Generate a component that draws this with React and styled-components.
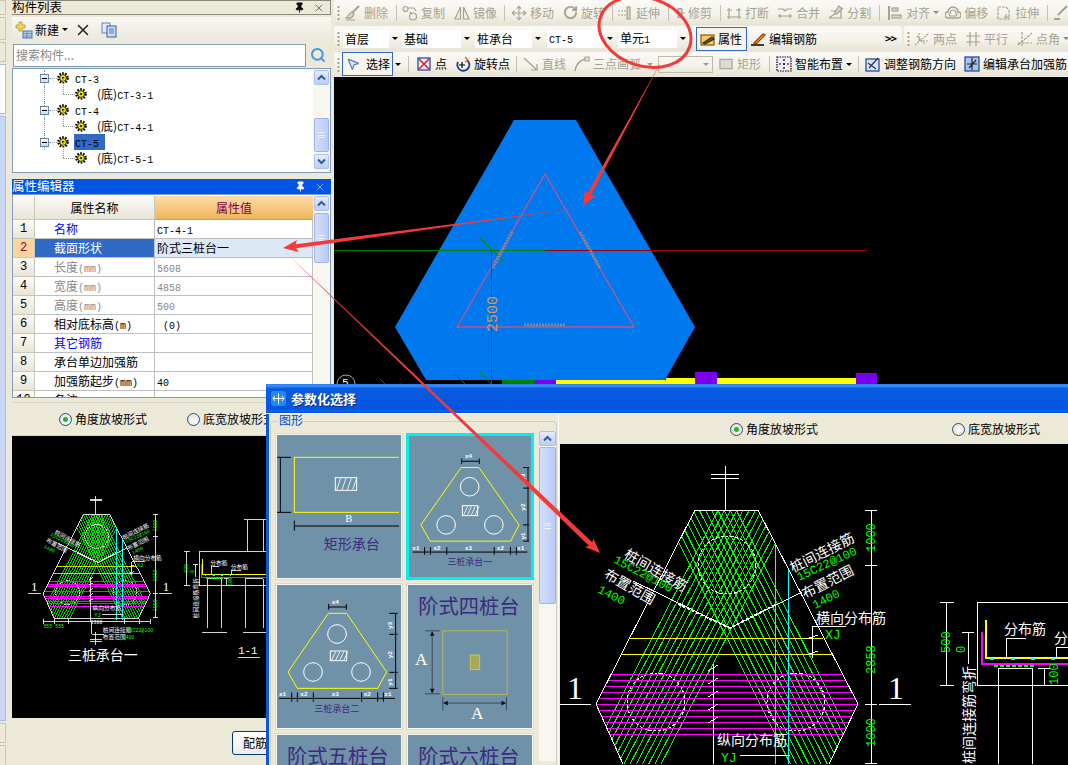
import React from 'react';
import styled, { createGlobalStyle } from 'styled-components';
import { Move, RotateCw, Search, MousePointer2, X, Pin } from 'lucide-react';

const Global = createGlobalStyle`
  html, body { margin: 0; padding: 0; background: #ece9d8; }
  body { font-family: "Noto Sans CJK SC", "Liberation Sans", sans-serif; font-size: 12px; color: #000; }
  * { box-sizing: border-box; }
`;

const Page = styled.div`
  position: relative; width: 1068px; height: 765px; overflow: hidden; display: flex;
  background: #ece9d8; line-height: 1;
`;
const Mono = styled.span`font-family: "Liberation Mono", monospace; font-size: 10px;`;

/* ---------- left strip ---------- */
const Strip = styled.div`
  width: 12px; flex: none; display: flex; flex-direction: column; gap: 2px; padding-right: 6px;
`;
const StripTab = styled.div`
  height: ${p => p.$h}px; flex: none; background: #ece9d8; border: 1px solid #c9c6b4; border-left: 0;
`;
const StripList = styled.div`
  height: ${p => p.$h}px; flex: none; background: ${p => p.$bg}; border: 1px solid #a8bdea; border-left: 0;
`;

/* ---------- left panels ---------- */
const Side = styled.div`width: 322px; flex: none; display: flex; flex-direction: column; padding-right: 3px; background: #ece9d8;`;
const PaneTitle = styled.div`
  height: 15px; flex: none; display: flex; align-items: center; font-size: 12.5px; padding-right: 5px; width: 319px;
  background: ${p => p.$on ? '#0055e5' : '#ece9d8'}; color: ${p => p.$on ? '#fff' : '#000'};
  ${p => !p.$on && 'border: 1px solid #8a8878; border-left: 0; border-top: 1px solid #8a8878;'}
  svg { flex: none; }
`;
const TitleText = styled.span`flex: 1;`;
const TreeTools = styled.div`
  height: 25px; margin-top: 2px; display: flex; align-items: center; padding-left: 3px;
  background: linear-gradient(#f8f7f2, #ebe8db);
`;
const NewLabel = styled.span`font-size: 12px; margin-left: 2px;`;
const Caret = styled.span`
  width: 0; height: 0; border-left: 3px solid transparent; border-right: 3px solid transparent;
  border-top: 3px solid ${p => p.$c || '#000'}; margin-left: ${p => p.$ml ?? 3}px; flex: none;
`;
const SearchRow = styled.div`height: 24px; margin-top: 1px; display: flex; align-items: center; padding-left: 1px;`;
const SearchBox = styled.div`
  width: 293px; height: 23px; background: #fff; border: 1px solid #7f9db9; color: #888; font-size: 12px;
  display: flex; align-items: center; padding-left: 2px;
`;
const SearchBtn = styled.div`width: 24px; display: flex; justify-content: center; color: #3e9be8;`;
const TreeBox = styled.div`
  height: 105px; width: 319px; flex: none; margin-top: 1px; background: #fff; border: 1px solid #7f9db9; display: flex;
`;
const TreeBody = styled.div`flex: 1; padding-top: 1px; overflow: hidden;`;
const TreeRow = styled.div`
  position: relative; height: 16px; display: flex; align-items: center; padding-left: ${p => p.$in}px;
  &::before {
    content: ''; position: absolute; left: 31px; top: 0;
    height: ${p => p.$stem}px; border-left: 1px dotted #999;
  }
`;
const Expand = styled.span`
  position: relative; width: 9px; height: 9px; flex: none; border: 1px solid #6a89a8; background: linear-gradient(#fff, #cfd8e4);
  &::after { content: ''; position: absolute; left: 1px; top: 3px; width: 5px; height: 1px; background: #000; }
`;
const Dots = styled.span`width: ${p => p.$w}px; flex: none; border-top: 1px dotted #999;`;
const ChildStem = styled.span`
  position: absolute; left: 50px; top: -8px; height: 16px; border-left: 1px dotted #999;
`;
const NodeName = styled.span`
  display: block; margin-left: ${p => p.$ml}px; height: 16px; line-height: 15px; padding: 0 1px; min-width: 31px; font-size: 12px; white-space: nowrap;
  background: ${p => p.$sel ? '#316ac5' : 'transparent'};
`;
const Gap = styled.div`height: 6px; flex: none;`;

const Bar = styled.div`width: 17px; flex: none; padding: 1px; display: flex; flex-direction: column; background: #f7f6f0;`;
const BarBtn = styled.div`
  height: 15px; flex: none; border: 1px solid #aebfee; border-radius: 2px; background: linear-gradient(#e3ebfd, #bccdf6);
  display: flex; align-items: center; justify-content: center;
`;
const Thumb = styled.div`
  height: ${p => p.$h}px; flex: none; margin: ${p => p.$mt}px 0 ${p => p.$mb ?? 0}px; border: 1px solid #9fb4ea; border-radius: 2px;
  background: linear-gradient(90deg, #d3defa, #b9caf5); display: flex; align-items: center; justify-content: center;
`;
const Grip = styled.span`width: 7px; height: 6px; border-top: 1px solid #eef2ff; border-bottom: 1px solid #eef2ff; position: relative;
  &::after { content: ''; position: absolute; left: 0; right: 0; top: 1.5px; border-top: 1px solid #eef2ff; }`;
const Chev = ({ up }) => (
  <svg width="9" height="7" viewBox="0 0 9 7"><path d={up ? 'M1 5.5 4.5 2 8 5.5' : 'M1 1.5 4.5 5 8 1.5'} fill="none" stroke="#3a5a8a" strokeWidth="2" /></svg>
);

const Grid = styled.div`
  width: 319px; height: 204px; flex: none; border: 1px solid #7f9db9; background: #fff; display: flex;
`;
const GridBody = styled.div`flex: 1; overflow: hidden; display: flex; flex-direction: column; border-top: 1px solid #fff;`;
const GridRow = styled.div`height: ${p => p.$h || 19}px; flex: none; display: flex;`;
const Idx = styled.div`
  width: 22px; flex: none; display: flex; align-items: center; justify-content: center; font-size: 12px; font-family: "Liberation Mono", monospace;
  background: ${p => p.$sel ? '#ffd699' : 'linear-gradient(#fbfaf6, #e8e5d8)'}; color: ${p => p.$sel ? '#80004e' : '#000'};
  border-right: 1px solid #c9c7ba; border-bottom: 1px solid #c9c7ba;
`;
const NameCell = styled.div`
  width: 120px; flex: none; line-height: 17px; padding-left: 19px; font-size: 12px; white-space: nowrap;
  color: ${p => p.$sel ? '#fff' : p.$c}; background: ${p => p.$sel ? '#316ac5' : '#fff'};
  border-right: 1px solid #c0c0c0; border-bottom: 1px solid #c0c0c0;
`;
const ValueCell = styled.div`
  flex: 1; line-height: 17px; padding-left: 2px; font-size: 12px; white-space: nowrap;
  color: ${p => p.$c}; background: ${p => p.$sel ? '#dde8f5' : '#fff'}; border-bottom: 1px solid #c0c0c0; border-right: 1px solid #c0c0c0;
`;
const HeadIdx = styled.div`width: 22px; flex: none; background: linear-gradient(#fbfaf6, #e8e5d8); border-right: 1px solid #c9c7ba; border-bottom: 1px solid #c9c7ba;`;
const HeadName = styled.div`width: 120px; flex: none; display: flex; align-items: center; justify-content: center; font-size: 12px;
  background: linear-gradient(#fbfaf6, #e8e5d8); border-right: 1px solid #c9c7ba; border-bottom: 1px solid #c9c7ba;`;
const HeadValue = styled.div`flex: 1; display: flex; align-items: center; justify-content: center; font-size: 12px; color: #80004e;
  background: linear-gradient(#fddca8, #efb55c); border-bottom: 1px solid #c9a060;`;
const RadioBar = styled.div`
  height: 34px; width: 319px; flex: none; margin-top: 4px; display: flex; align-items: center; padding-left: ${p => p.$pl}px;
  border: 1px solid #d8d5c4; border-left: 0;
`;
const Radio = styled.span`
  position: relative; width: 13px; height: 13px; flex: none; border-radius: 50%; border: 1px solid #1c5180;
  background: radial-gradient(circle at 60% 60%, #fff, #dcd9c8);
  ${p => p.$on && `&::after { content: ''; position: absolute; left: 3px; top: 3px; width: 5px; height: 5px; border-radius: 50%; background: #2bb12b; }`}
`;
const RadioText = styled.span`margin-left: 3px; margin-right: ${p => p.$mr || 0}px; font-size: 12px; white-space: nowrap;`;
const Preview = styled.div`width: 254px; height: 282px; flex: none; background: #000; overflow: hidden; line-height: 0;`;
const SideBottom = styled.div`flex: 1; padding: 13px 0 0 220px;`;
const PushBtn = styled.div`
  width: 70px; height: 24px; border: 1px solid #003c74; border-radius: 3px; background: linear-gradient(#fff, #ecebe5);
  display: flex; align-items: center; justify-content: center; font-size: 12px;
`;

/* ---------- main ---------- */
const Main = styled.div`flex: 1; min-width: 0; display: flex; flex-direction: column;`;
const ToolRow = styled.div`height: ${p => p.$h}px; flex: none; display: flex; background: #ece9d8; padding-bottom: 1px;`;
const Band = styled.div`
  flex: ${p => p.$w ? 'none' : 1}; width: ${p => p.$w ? p.$w + 'px' : 'auto'}; min-width: 0; height: 100%; display: flex; align-items: center;
  background: linear-gradient(#fbfaf6, #f3f1e8 60%, #e6e3d5); border-radius: 3px; margin-right: ${p => p.$mr || 0}px; overflow: hidden; white-space: nowrap;
`;
const Handle = styled.span`
  width: 3px; height: 15px; flex: none; margin-left: ${p => p.$ml ?? 3}px;
  background-image: radial-gradient(circle, #a09d8c 1px, transparent 1.2px); background-size: 3px 4px;
`;
const Sep = styled.span`width: 1px; height: 16px; flex: none; background: #c5c2b0; margin-left: ${p => p.$ml}px;`;
const Tool = styled.span`
  display: flex; align-items: center; flex: none; gap: 3px; margin-left: ${p => p.$ml}px; font-size: 12px;
  color: ${p => p.$off ? '#a5a294' : '#000'};
`;
const Combo = styled.div`
  width: ${p => p.$w}px; margin-left: ${p => p.$ml}px; height: 18px; flex: none; display: flex; background: #fff; align-items: center; padding-left: 2px; font-size: 12px;
`;
const ComboText = styled.span`flex: 1;`;
const ComboBtn = styled.span`
  width: 11px; height: 18px; display: flex; align-items: center; justify-content: center; background: linear-gradient(#fbfaf6, #ebe8dc);
`;
const Pressed = styled.span`
  display: flex; align-items: center; gap: ${p => p.$g}px; height: 24px; width: ${p => p.$w}px; flex: none; margin-left: ${p => p.$ml}px; padding-left: 3px;
  border: 1px solid #316ac5; background: #f6f4ec; font-size: 12px;
`;
const More = styled.span`margin-left: auto; margin-right: 6px; font-size: 11px; font-weight: bold; color: #000; letter-spacing: -1px;`;
const DisabledCombo = styled.span`
  width: 55px; height: 17px; flex: none; margin-left: ${p => p.$ml}px; border: 1px solid #bdbaa8; display: flex; justify-content: flex-end; align-items: center; padding-right: 3px;
`;
const Canvas = styled.div`flex: 1; background: #000; overflow: hidden; line-height: 0;`;

/* ---------- dialog ---------- */
const Dialog = styled.div`
  position: absolute; left: 266px; top: 384px; width: 802px; height: 381px; display: flex; flex-direction: column;
  background: #ece9d8; border-left: 3px solid #0a57e0;
`;
const DialogTitle = styled.div`
  height: 30px; flex: none; margin-left: -3px; display: flex; align-items: center; padding-left: 5px; gap: 5px;
  background: linear-gradient(#1f7cf5 0, #3d90fb 6%, #0a5be0 16%, #0456e0 85%, #0a66f0 96%, #0040c0);
  color: #fff; font-size: 13px; font-weight: bold; text-shadow: 1px 1px 0 #0a2a80; border-bottom: 1px solid #fff;
`;
const DialogBody = styled.div`flex: 1; min-height: 0; display: flex; overflow: hidden;`;
const Group = styled.div`
  position: relative; width: 287px; height: 360px; flex: none; margin: 7px 0 0 1px; padding: 11px 0 0 4px;
  border: 1px solid #d0cfbd; border-radius: 4px; display: flex;
`;
const Legend = styled.span`position: absolute; left: 7px; top: -8px; padding: 0 1px; background: #ece9d8; color: #0046d5; font-size: 12px;`;
const Gallery = styled.div`display: grid; grid-template-columns: 128px 128px; grid-auto-rows: 147px; gap: 3px; height: 340px; overflow: hidden; width: 259px;`;
const ThumbCard = styled.div`
  border: ${p => p.$on ? '3px solid #00f0f0' : '2px solid #f8f7f0'}; background: #7092a8; line-height: 0;
  outline: ${p => p.$on ? 'none' : '1px solid #dcdacb'}; outline-offset: -1px;
`;
const DialogBar = styled(Bar)`margin: -2px 0 0 5px; background: #f7f6f0; height: 330px; padding: 0;`;
const DrawPane = styled.div`flex: 1; min-width: 0; margin-left: 1px; display: flex; flex-direction: column; border-left: 1px solid #fff;`;
const DrawHead = styled.div`height: 30px; flex: none; display: flex; align-items: center; padding-left: 171px;`;
const DrawArea = styled.div`flex: 1; margin-left: 1px; background: #000; overflow: hidden; line-height: 0;`;
const Overlay = styled.svg`position: absolute; left: 0; top: 0; pointer-events: none;`;

const CadText = styled.text`font-family: "Noto Sans CJK SC", sans-serif;`;
const CadNum = styled.text`font-family: "Liberation Mono", monospace;`;
const SerifText = styled.text`font-family: "Liberation Serif", serif;`;

/* ---------- icons ---------- */
const Ico = ({ children, c = '#a5a294', w = 16 }) => (
  <svg width={w} height="16" viewBox="0 0 16 16" fill="none" stroke={c} strokeWidth="1.2" style={{ flex: 'none' }}>{children}</svg>
);
const Gear = () => (
  <svg width="12" height="12" viewBox="0 0 12 12" style={{ flex: 'none' }}>
    <circle cx="6" cy="6" r="4.6" fill="none" stroke="#000" strokeWidth="2.4" strokeDasharray="1.6 1.3" />
    <circle cx="6" cy="6" r="3.4" fill="#ffee00" stroke="#000" strokeWidth=".8" />
    <circle cx="6" cy="6" r="1.3" fill="#333" />
  </svg>
);
const I = {
  brush: <Ico><path d="M14 1 7 8" strokeWidth="2" /><path d="M7 7c-3 0-3 4-6 6 3 1 7 0 8-4z" fill="#d9d7cb" /><path d="M1 15h9" /></Ico>,
  copy: <Ico><circle cx="3.5" cy="4" r="2.5" /><circle cx="11" cy="11.5" r="3.5" /><path d="M6 3h6l2 3M8 7l2 2" /></Ico>,
  mirror: <Ico><path d="M6.5 2v12H1zM9.5 2v12H15z" /></Ico>,
  move: <Move size={16} color="#a5a294" strokeWidth={1.6} />,
  rotate: <RotateCw size={15} color="#a5a294" strokeWidth={3} />,
  extend: <Ico><path d="M1 6h8M1 10h8" strokeDasharray="2 1" /><rect x="10" y="2" width="3" height="12" fill="#d9d7cb" /></Ico>,
  trim: <Ico w={10}><path d="M1 8h14" strokeWidth="2" /><rect x="5" y="1" width="6" height="14" fill="#d9d7cb" strokeWidth="2" /></Ico>,
  cut: <Ico><path d="M1 5h5M10 5h5M1 12h14M3 3v11M13 3v11" /></Ico>,
  join: <Ico><path d="M1 4h5l2 2M15 4h-5l-2 2M1 11h14" /><path d="M3 9v4M13 9v4" /></Ico>,
  split: <Ico><path d="M1 13 15 3M1 13h13M3 6h10v7" /><path d="M11 1l3 3-5 5-2 0 0-2z" fill="#d9d7cb" /></Ico>,
  align: <Ico><path d="M2 1v14" strokeWidth="2" /><rect x="5" y="3" width="6" height="3" fill="#d9d7cb" /><rect x="5" y="10" width="9" height="3" fill="#d9d7cb" /></Ico>,
  offset: <Ico><path d="M3 13a3 3 0 0 1 0-6 5 5 0 0 1 10 0 3 3 0 0 1 0 6z" strokeWidth="1.5" /><path d="M5 11a2 2 0 0 1 0-3 3 3 0 0 1 6 0 2 2 0 0 1 0 3z" /></Ico>,
  stretch: <Ico><path d="M2 2h8l3 3v9H2z" strokeDasharray="3 1" /><path d="M8 12h5M10 9v5" /></Ico>,
  edge: <Ico><path d="M14 1 8 7M8 7l-3 3M1 14h6" strokeWidth="2" /></Ico>,
  prop: <Ico c="#8a5a00"><rect x="1" y="4" width="13" height="10" fill="#ffc860" /><path d="M3 12 12 6l2 2-9 5z" fill="#4a6a2a" stroke="#333" /></Ico>,
  pen: <Ico c="#000"><path d="M1 14h13" strokeWidth="1.4" /><path d="M4 12 13 3l2 1-9 9z" fill="#ffc040" stroke="#a03000" /></Ico>,
  two: <Ico><path d="M1 14 15 2M3 5l8 8M5 2v8h9" strokeDasharray="2 1" /></Ico>,
  par: <Ico><path d="M1 5h14M1 11h14M5 1v14M11 1v14" /></Ico>,
  ang: <Ico><path d="M1 14 15 2M1 12h14M5 1v14" strokeDasharray="3 1" /></Ico>,
  point: <Ico c="#1c3f94"><rect x="2" y="2" width="12" height="12" fill="#e8eeff" /><path d="M3 3l10 10M13 3 3 13" stroke="#e02020" strokeWidth="1.6" /></Ico>,
  turn: <Ico c="#1c3f94" w={18}><path d="M13 4a6 6 0 1 1-9 2" strokeWidth="1.8" /><path d="M8 6v6M5 9h6" stroke="#000" /><path d="M11 1l3 3-3 2" stroke="#e06010" /></Ico>,
  line: <Ico><path d="M1 2l13 12M14 8v6H8" /></Ico>,
  arc: <Ico><path d="M1 15C2 8 6 4 12 3" strokeWidth="1.6" /><path d="M11 1h4v4h-4z" fill="#e5e3d8" /></Ico>,
  rect: <Ico w={15}><rect x="1" y="3" width="13" height="10" fill="#dedcd0" /></Ico>,
  smart: <Ico c="#1c3f94"><rect x="1" y="1" width="14" height="14" strokeDasharray="1.5 1" stroke="#000" fill="#eef" /><path d="M8 3v10M3 8h10" stroke="#000" strokeDasharray="2 2" /></Ico>,
  adjust: <Ico c="#1c3f94"><rect x="1" y="3" width="13" height="12" fill="#d8e4f8" /><path d="M4 12 13 2M3 7l8 6" stroke="#334" /></Ico>,
  edit: <Ico c="#1c3f94"><rect x="1" y="1" width="14" height="14" fill="#a8c4ee" /><path d="M8 2v12M3 8h10M5 12 12 4" stroke="#223" /></Ico>,
};

/* ---------- CAD drawing (shared by the preview and the dialog) ---------- */
const HEX = '695,511 758,511 858,705 829,765 623,765 596,705';
const range = (n, f) => Array.from({ length: n }, (_, i) => f(i));
const hatch = (dx, dy) => range(13, i => {
  const o = -33 + i * 5.5; const nx = dy, ny = -dx;
  const cx = 727 + nx * o, cy = 566 + ny * o;
  return <line key={i} x1={cx - dx * 120} y1={cy - dy * 120} x2={cx + dx * 260} y2={cy + dy * 260} />;
});

const Cad = ({ id, sw = 1 }) => (
  <g strokeWidth={sw} fill="none">
    <clipPath id={id}><polygon points={HEX} /></clipPath>
    <g clipPath={`url(#${id})`} stroke="#00ff00">
      {hatch(-0.46, 0.888)}
      {hatch(0.45, 0.893)}
    </g>
    <circle cx="727" cy="566" r="29" stroke="#fff" strokeDasharray="3 2" />
    <circle cx="656" cy="703" r="29" stroke="#fff" strokeDasharray="3 2" />
    <circle cx="796" cy="703" r="29" stroke="#fff" strokeDasharray="3 2" />
    <g clipPath={`url(#${id})`} stroke="#ff00ff">
      {range(11, i => <rect key={i} x="590" width="275" height={sw} y={675 + i * 6} fill="#ff00ff" stroke="none" />)}
    </g>
    <polygon points={HEX} stroke="#fff" />
    <path d="M629 639H823M621 655H832" stroke="#ffff00" />
    <rect x="775" y="545" width={sw} height="225" fill="#00ffff" stroke="none" />
    <rect x="788" y="571" width={sw} height="199" fill="#00ffff" stroke="none" />
    <path d="M725 467V511M711 475H739M711 479H739" stroke="#fff" />
    <path d="M633 582 730 629 802 593" stroke="#fff" />
    <path d="M678 605 730 629 777 605" stroke="#fff" strokeDasharray="3 2" strokeWidth={sw * 2} />
    <path d="M713 665V775M708 672l10-6M708 685l10-6M708 698l10-6M708 711l10-6M708 724l10-6" stroke="#fff" />
    <path d="M812 659V627H846M806 640l12-4M806 656l12-4M740 756H790" stroke="#fff" />
    <path d="M871 511V765M865 511H877M865 566H877M865 705H877M865 764H877" stroke="#fff" />
    <path d="M560 705H591M879 705H911" stroke="#fff" />
    <path d="M946 603V686M940 603H954M940 686H954M968 633V665M962 633H974" stroke="#fff" />
    <path d="M977 603H1210V686H977ZM998 790V669H1032V790M1089 790V669H1133V790M1094 603V525M1133 603V525M1087 525H1140" stroke="#fff" />
    <path d="M986 621V659H1210" stroke="#ffff00" strokeWidth={sw * 1.4} />
    <path d="M982 633V665H1210" stroke="#ff00ff" strokeWidth={sw * 1.4} />
    <path d="M1006 660V639H1026M1056 660V648H1080M1044 669V686M1038 669H1050" stroke="#fff" />
    <path d="M990 660h4M1011 660h4M1031 660h4M1051 660h4" stroke="#00ffff" strokeWidth={sw * 2} />
    <path d="M994 667h4M1000 667h4M1006 667h4M1012 667h4M1018 667h4M1024 667h4M1030 667h4" stroke="#00ff00" strokeWidth={sw * 2} />
    {/* parts that only the small preview shows */}
    <path d="M596 774H858M596 768V780M623 768V780M657 768V780M796 768V780M832 768V780M858 768V780M715 775V804H745M725 800V830M711 818H739M711 822H739M1072 860H1125M985 801H1045M1085 801H1140" stroke="#fff" />

    <g fill="#fff" stroke="none">
      <CadText fontSize="14" transform="rotate(30 623 558)" x="623" y="558">桩间连接筋</CadText>
      <CadText fontSize="14" transform="rotate(30 603 578)" x="603" y="578">布置范围</CadText>
      <CadText fontSize="14" transform="rotate(-27 793 574)" x="793" y="574">桩间连接筋</CadText>
      <CadText fontSize="14" transform="rotate(-27 805 600)" x="805" y="600">布置范围</CadText>
      <CadText fontSize="14" x="816" y="624">横向分布筋</CadText>
      <CadText fontSize="14" x="717" y="746">纵向分布筋</CadText>
      <SerifText fontSize="32" x="567" y="700">1</SerifText>
      <SerifText fontSize="32" x="888" y="700">1</SerifText>
      <CadText fontSize="14" x="1004" y="635">分布筋</CadText>
      <CadText fontSize="14" x="1054" y="644">分布筋</CadText>
      <CadText fontSize="14" transform="rotate(-90 974 765)" x="974" y="765">桩间连接筋弯折</CadText>
      <CadText fontSize="34" x="657" y="866">三桩承台一</CadText>
      <CadNum fontSize="26" x="1072" y="853">1-1</CadNum>
      <CadNum fontSize="12" x="712" y="780">3300</CadNum>
      <CadText fontSize="14" x="742" y="800">桩间连接筋</CadText>
      <CadText fontSize="14" x="742" y="816">布置范围</CadText>
    </g>
    <g fill="#00ff00" stroke="none">
      <CadNum fontSize="12" transform="rotate(28 613 563)" x="613" y="563">15C22@100</CadNum>
      <CadNum fontSize="12" transform="rotate(27 597 593)" x="597" y="593">1400</CadNum>
      <CadNum fontSize="12" transform="rotate(-25 799 582)" x="799" y="582">15C22@100</CadNum>
      <CadNum fontSize="12" transform="rotate(-27 815 610)" x="815" y="610">1400</CadNum>
      <CadNum fontSize="13" x="825" y="640">XJ</CadNum>
      <CadNum fontSize="13" x="721" y="763">YJ</CadNum>
      <CadNum fontSize="12" transform="rotate(-90 875 553)" x="875" y="553">1000</CadNum>
      <CadNum fontSize="12" transform="rotate(-90 875 675)" x="875" y="675">2858</CadNum>
      <CadNum fontSize="12" transform="rotate(-90 875 748)" x="875" y="748">1000</CadNum>
      <CadNum fontSize="12" transform="rotate(-90 950 654)" x="950" y="654">500</CadNum>
      <CadNum fontSize="12" transform="rotate(-90 965 654)" x="965" y="654">0</CadNum>
      <CadNum fontSize="12" transform="rotate(-90 1058 686)" x="1058" y="686">100</CadNum>
      <CadNum fontSize="12" x="597" y="790">555 555</CadNum>
      <CadNum fontSize="12" x="800" y="800">15C22@100</CadNum>
      <CadNum fontSize="12" x="790" y="816">1400</CadNum>
    </g>
  </g>
);

/* ---------- gallery thumbnails, drawn in 3x coordinates ---------- */
const Hatch = ({ x, y, w, h }) => (
  <g>
    <rect x={x} y={y} width={w} height={h} fill="none" stroke="#fff" strokeWidth="3" />
    {range(4, i => <line key={i} x1={x + 4 + i * w / 4} y1={y + h - 2} x2={x + 16 + i * w / 4} y2={y + 2} stroke="#fff" strokeWidth="2.5" />)}
  </g>
);
const Pile = ({ shape, circles, rect, lines, labels, title, tx, ty }) => (
  <g>
    <polygon points={shape} fill="none" stroke="#ffff00" strokeWidth="3" />
    {circles.map(([x, y]) => <circle key={x} cx={x} cy={y} r="28" fill="none" stroke="#fff" strokeWidth="3" />)}
    <Hatch {...rect} />
    <path d={lines} stroke="#000" strokeWidth="3" fill="none" />
    {labels.map(([s, x, y, r]) => (
      <CadNum key={s + x + y} x={x} y={y} fill="#fff" fontSize="18" fontWeight="bold" transform={r ? `rotate(-90 ${x} ${y})` : undefined}>{s}</CadNum>
    ))}
    <CadText x={tx} y={ty} fontSize="27" fill="#3a2a80">{title}</CadText>
  </g>
);
const VB = styled.svg`display: block; width: ${p => p.$w || 122}px; height: ${p => p.$h || 140}px;`;

const Thumbs = () => (
  <Gallery>
    <ThumbCard>
      <VB viewBox="36 168 366 420">
        <rect x="88" y="235" width="330" height="165" fill="none" stroke="#ffff00" strokeWidth="3" />
        <Hatch x={211} y={296} w={64} h={38} />
        <path d="M36 235H78M36 400H78M46 235V400M88 425V455M88 441H402" stroke="#000" strokeWidth="3" fill="none" />
        <SerifText x="241" y="430" fontSize="32" fill="#fff">B</SerifText>
        <CadText x="176" y="510" fontSize="42" fill="#3a2a80">矩形承台</CadText>
      </VB>
    </ThumbCard>
    <ThumbCard $on>
      <VB viewBox="431 171 362 414" $w={120} $h={138}>
        <Pile shape="588,265 642,265 763,438 738,487 495,487 467,438"
          circles={[[614, 323], [543, 438], [687, 438]]}
          rect={{ x: 592, y: 380, w: 46, h: 30 }}
          lines="M590 238V254M643 238V254M590 246H643M775 265H795M775 327H795M775 438H795M775 487H795M790 265V487M442 520H788M478 505V528M496 505V528M545 505V528M688 505V528M737 505V528M755 505V528"
          labels={[['x4', 600, 236], ['x1', 441, 513], ['x2', 505, 513], ['x3', 600, 513], ['x2', 696, 513], ['x1', 757, 513], ['y3', 780, 305, 1], ['y2', 780, 395, 1], ['y1', 780, 482, 1]]}
          title="三桩承台一" tx="547" ty="560" />
      </VB>
    </ThumbCard>
    <ThumbCard>
      <VB viewBox="36 618 366 420">
        <Pile shape="190,703 245,703 365,879 338,928 97,928 69,879"
          circles={[[216, 765], [144, 879], [288, 879]]}
          rect={{ x: 196, y: 816, w: 49, h: 29 }}
          lines="M191 675V692M244 675V692M191 684H244M373 703H398M373 766H398M373 880H398M373 928H398M392 703V928M42 958H390M80 940V968M97 940V968M145 940V968M290 940V968M338 940V968M355 940V968"
          labels={[['x4', 200, 676], ['x1', 42, 952], ['x2', 106, 952], ['x3', 200, 952], ['x2', 296, 952], ['x1', 358, 952], ['y3', 380, 750, 1], ['y2', 380, 838, 1], ['y1', 380, 920, 1]]}
          title="三桩承台二" tx="148" ty="999" />
      </VB>
    </ThumbCard>
    <ThumbCard>
      <VB viewBox="428 618 368 420">
        <CadText x="459" y="704" fontSize="61" fill="#3a2a80">阶式四桩台</CadText>
        <rect x="533" y="755" width="194" height="192" fill="none" stroke="#b5b55a" strokeWidth="3" />
        <rect x="616" y="828" width="28" height="44" fill="#a8a858" stroke="#c8c850" strokeWidth="3" />
        <path d="M480 755H524M480 945H524M501 760V940M533 955V995M725 955V995M538 973H720" stroke="#3a4a58" strokeWidth="3" fill="none" />
        <path d="M501 756l-7 14h14zM501 944l-7-14h14zM534 973l14-7v14zM724 973l-14-7v14z" fill="#111" />
        <SerifText x="449" y="858" fontSize="52" fill="#fff">A</SerifText>
        <SerifText x="618" y="1022" fontSize="52" fill="#fff">A</SerifText>
      </VB>
    </ThumbCard>
    <ThumbCard>
      <VB viewBox="36 1068 366 420"><CadText x="66" y="1155" fontSize="61" fill="#3a2a80">阶式五桩台</CadText></VB>
    </ThumbCard>
    <ThumbCard>
      <VB viewBox="428 1068 368 420"><CadText x="459" y="1155" fontSize="61" fill="#3a2a80">阶式六桩台</CadText></VB>
    </ThumbCard>
  </Gallery>
);

/* ---------- tapered annotation arrow ---------- */
const arrow = (x1, y1, x2, y2, w) => {
  const L = Math.hypot(x2 - x1, y2 - y1); const dx = (x2 - x1) / L, dy = (y2 - y1) / L; const nx = -dy, ny = dx;
  const nk = 13; const bx = x2 - dx * nk, by = y2 - dy * nk;
  const p = (x, y) => `${x.toFixed(1)},${y.toFixed(1)}`;
  return [p(x1, y1), p(bx + nx * w / 2, by + ny * w / 2), p(bx + nx * 6 - dx * 2, by + ny * 6 - dy * 2), p(x2, y2),
    p(bx - nx * 6 - dx * 2, by - ny * 6 - dy * 2), p(bx - nx * w / 2, by - ny * w / 2)].join(' ');
};

/* ---------- data ---------- */
const rows = [
  ['1', '名称', <Mono>CT-4-1</Mono>, '#0000ff', '#000'],
  ['2', '截面形状', '阶式三桩台一', '#fff', '#000', true],
  ['3', <>长度<Mono>(mm)</Mono></>, <Mono>5608</Mono>, '#888', '#888'],
  ['4', <>宽度<Mono>(mm)</Mono></>, <Mono>4858</Mono>, '#888', '#888'],
  ['5', <>高度<Mono>(mm)</Mono></>, <Mono>500</Mono>, '#888', '#888'],
  ['6', <>相对底标高<Mono>(m)</Mono></>, <Mono>&nbsp;(0)</Mono>, '#000', '#000'],
  ['7', '其它钢筋', '', '#0000ff', '#000'],
  ['8', '承台单边加强筋', '', '#000', '#000'],
  ['9', <>加强筋起步<Mono>(mm)</Mono></>, <Mono>40</Mono>, '#000', '#000'],
  ['10', '备注', '', '#000', '#000'],
];
const row1 = [
  ['brush', '删除', 5], ['|', 8], ['copy', '复制', 5], ['mirror', '镜像', 9], ['|', 7], ['move', '移动', 6], ['rotate', '旋转', 9],
  ['|', 7], ['extend', '延伸', 4], ['|', 8], ['trim', '修剪', 6], ['|', 8], ['cut', '打断', 5], ['join', '合并', 8], ['split', '分割', 8],
  ['|', 8], ['align', '对齐', 7, true], ['offset', '偏移', 6], ['stretch', '拉伸', 8], ['|', 8], ['edge', '', 5],
];

const Tools = ({ list, off = true }) => list.map((t, i) => (
  t[0] === '|' ? <Sep key={i} $ml={t[1]} /> : (
    <React.Fragment key={i}>
      <Tool $ml={t[2]} $off={off}>{I[t[0]]}{t[1]}</Tool>
      {t[3] && <Caret $c="#888" $ml={3} />}
    </React.Fragment>
  )
));

const tree = [['CT-3', '(底)'], ['CT-4', '(底)'], ['CT-5', '(底)']];

export default function App() {
  return (
    <Page>
      <Global />
      <Strip>
        <StripTab $h={15} />
        <StripTab $h={23} />
        <StripTab $h={20} />
        <StripList $h={50} $bg="#fff" />
        <StripList $h={605} $bg="#c8d6f6" />
        <StripTab $h={20} />
        <StripTab $h={23} />
      </Strip>

      <Side>
        <PaneTitle>
          <TitleText>构件列表</TitleText>
          <Pin size={11} fill="#000" />
          <X size={12} style={{ marginLeft: 8 }} strokeWidth={1} />
        </PaneTitle>
        <TreeTools>
          <svg width="18" height="18" viewBox="0 0 18 18" style={{ flex: 'none' }}>
            <path d="M4 1h3v3h3v3H7v3H4V7H1V4h3z" fill="#f7d64c" stroke="#a68a20" strokeWidth=".7" />
            <rect x="8" y="10" width="9" height="7" fill="#bcd0f0" stroke="#4a76b8" />
            <path d="M8 12.5h9M8 15h9M12 10v7" stroke="#4a76b8" strokeWidth=".7" />
          </svg>
          <NewLabel>新建</NewLabel>
          <Caret $ml={3} />
          <X size={18} strokeWidth={2} color="#222" style={{ marginLeft: 6 }} />
          <svg width="16" height="16" viewBox="0 0 16 16" style={{ flex: 'none', marginLeft: 9 }}>
            <rect x="1" y="1" width="8" height="10" fill="#dfe9fa" stroke="#5f87c2" />
            <rect x="6" y="4" width="9" height="11" fill="#cfe0f8" stroke="#2a5fa8" />
            <path d="M8 7h5M8 9h5M8 11h5" stroke="#2a5fa8" strokeWidth=".8" />
          </svg>
        </TreeTools>
        <SearchRow>
          <SearchBox>搜索构件...</SearchBox>
          <SearchBtn><Search size={16} strokeWidth={3} /></SearchBtn>
        </SearchRow>
        <TreeBox>
          <TreeBody>
            {tree.map(([n, pre], i) => (
              <React.Fragment key={n}>
                <TreeRow $in={27} $stem={16}>
                  <Expand />
                  <Dots $w={8} />
                  <Gear />
                  <NodeName $ml={5} $sel={n === 'CT-5'}><Mono>{n}</Mono></NodeName>
                </TreeRow>
                <TreeRow $in={50} $stem={i < 2 ? 16 : 0}>
                  <ChildStem />
                  <Dots $w={12} />
                  <Gear />
                  <NodeName $ml={9}>{pre}<Mono>{n}-1</Mono></NodeName>
                </TreeRow>
              </React.Fragment>
            ))}
          </TreeBody>
          <Bar>
            <BarBtn><Chev up /></BarBtn>
            <Thumb $h={34} $mt={33} $mb={2}><Grip /></Thumb>
            <BarBtn><Chev /></BarBtn>
          </Bar>
        </TreeBox>
        <Gap />
        <PaneTitle $on>
          <TitleText>属性编辑器</TitleText>
          <Pin size={11} fill="#fff" />
          <X size={12} style={{ marginLeft: 8 }} strokeWidth={1} />
        </PaneTitle>
        <Grid>
          <GridBody>
            <GridRow $h={24}>
              <HeadIdx />
              <HeadName>属性名称</HeadName>
              <HeadValue>属性值</HeadValue>
            </GridRow>
            {rows.map(([n, name, val, nc, vc, sel]) => (
              <GridRow key={n}>
                <Idx $sel={sel}>{n}</Idx>
                <NameCell $c={nc} $sel={sel}>{name}</NameCell>
                <ValueCell $c={vc} $sel={sel}>{val}</ValueCell>
              </GridRow>
            ))}
          </GridBody>
          <Bar>
            <BarBtn><Chev up /></BarBtn>
            <Thumb $h={50} $mt={2}><Grip /></Thumb>
          </Bar>
        </Grid>
        <RadioBar $pl={47}>
          <Radio $on />
          <RadioText $mr={40}>角度放坡形式</RadioText>
          <Radio />
          <RadioText>底宽放坡形式</RadioText>
        </RadioBar>
        <Preview>
          <svg width="254" height="282" shapeRendering="crispEdges">
            <g transform="translate(-213.36 -131.51) scale(.41)"><Cad id="hexSmall" sw={2} /></g>
          </svg>
        </Preview>
        <SideBottom><PushBtn>配筋设置</PushBtn></SideBottom>
      </Side>

      <Main>
        <ToolRow $h={26}>
          <Band>
            <Handle />
            <Tools list={row1} />
          </Band>
        </ToolRow>
        <ToolRow $h={26}>
          <Band $w={568} $mr={2}>
            <Handle />
            {[['首层', 57, 3], ['基础', 70, 2], ['桩承台', 68, 3], [<Mono>CT-5</Mono>, 68, 4], [<>单元<Mono>1</Mono></>, 70, 3]].map(([t, w, ml], i) => (
              <Combo key={i} $w={w} $ml={ml}>
                <ComboText>{t}</ComboText>
                <ComboBtn><Caret $ml={0} /></ComboBtn>
              </Combo>
            ))}
            <Pressed $w={51} $ml={8} $g={2}>{I.prop}属性</Pressed>
            <Tool $ml={3} $off={false}>{I.pen}编辑钢筋</Tool>
            <More>&gt;&gt;</More>
          </Band>
          <Band>
            <Handle />
            <Tools list={[['two', '两点', 4], ['par', '平行', 8], ['ang', '点角', 9, true]]} />
          </Band>
        </ToolRow>
        <ToolRow $h={25}>
          <Band>
            <Handle />
            <Pressed $w={51} $ml={2} $g={6}><MousePointer2 size={14} color="#5a7ab8" fill="#dfe8fa" />选择</Pressed>
            <Caret $ml={2} />
            <Sep $ml={7} />
            <Tools off={false} list={[['point', '点', 7]]} />
            <Tools off={false} list={[['turn', '旋转点', 6]]} />
            <Sep $ml={6} />
            <Tools list={[['line', '直线', 6], ['arc', '三点画弧', 8]]} />
            <Caret $c="#999" $ml={6} />
            <DisabledCombo $ml={5}><Caret $c="#999" $ml={0} /></DisabledCombo>
            <Tools list={[['rect', '矩形', 6]]} />
            <Sep $ml={8} />
            <Tools off={false} list={[['smart', '智能布置', 6]]} />
            <Caret $ml={3} />
            <Sep $ml={6} />
            <Tools off={false} list={[['adjust', '调整钢筋方向', 6], ['edit', '编辑承台加强筋', 8]]} />
          </Band>
        </ToolRow>
        <Canvas>
          <svg width="734" height="688" viewBox="334 77 734 688">
            <polygon points="514,120 576,120 695,327 665,380 426,380 395,327" fill="#0079ef" />
            <polygon points="545,174 634,327 457,327" fill="none" stroke="#c8508c" strokeWidth="1.3" />
            <path d="M334 250.5H545" stroke="#008000" fill="none" />
            <path d="M545 250.5H867" stroke="#a00000" fill="none" />
            <path d="M491.5 250V384M480 238 503 261M454 373 465 384M480 372 491 384M380 379 385 384" stroke="#008000" fill="none" />
            <path d="M512 232 493 268M580 232 600 268" stroke="#7d8c98" strokeWidth="3" strokeDasharray="2 1" fill="none" />
            <path d="M524 325H565" stroke="#7d8c98" strokeWidth="3" strokeDasharray="2 1" fill="none" />
            <CadNum x="497" y="332" fontSize="15" fill="#d89a50" transform="rotate(-90 497 332)">2500</CadNum>
            <circle cx="346" cy="384" r="9" fill="none" stroke="#aaa" />
            <CadNum x="342" y="386" fontSize="11" fill="#fff">5</CadNum>
            <rect x="502" y="380" width="33" height="4" fill="#008000" />
            <rect x="535" y="380" width="21" height="4" fill="#7a00ee" />
            <rect x="556" y="380" width="110" height="4" fill="#ffff00" />
            <rect x="666" y="378" width="29" height="6" fill="#ffff00" />
            <rect x="695" y="372" width="22" height="12" fill="#7a00ee" />
            <rect x="717" y="378" width="139" height="6" fill="#ffff00" />
            <rect x="856" y="373" width="21" height="11" fill="#7a00ee" />
          </svg>
        </Canvas>
      </Main>

      <Dialog>
        <DialogTitle>
          <svg width="15" height="15" viewBox="0 0 15 15" style={{ flex: 'none' }}>
            <rect width="15" height="15" rx="3" fill="#1e8cf0" />
            <path d="M7.5 2v11M2 7.5h11M4 5l-2 2.5L4 10M11 5l2 2.5L11 10" stroke="#fff" fill="none" />
          </svg>
          参数化选择
        </DialogTitle>
        <DialogBody>
          <Group>
            <Legend>图形</Legend>
            <Thumbs />
            <DialogBar>
              <BarBtn><Chev up /></BarBtn>
              <Thumb $h={157} $mt={1}><Grip /></Thumb>
            </DialogBar>
          </Group>
          <DrawPane>
            <DrawHead>
              <Radio $on />
              <RadioText $mr={134}>角度放坡形式</RadioText>
              <Radio />
              <RadioText>底宽放坡形式</RadioText>
            </DrawHead>
            <DrawArea>
              <svg width="508" height="320" viewBox="560 445 508 320" shapeRendering="crispEdges">
                <Cad id="hexLarge" sw={1} />
              </svg>
            </DrawArea>
          </DrawPane>
        </DialogBody>
      </Dialog>

      <Overlay width="1068" height="765" viewBox="0 0 1068 765">
        <ellipse cx="645" cy="32" rx="47" ry="34" transform="rotate(18 645 32)" fill="none" stroke="#f23a3a" strokeWidth="3" />
        <polygon points={arrow(662, 60, 583, 206, 4)} fill="#f23a3a" />
        <polygon points={arrow(585, 207, 283, 248, 4)} fill="#f23a3a" />
        <polygon points={arrow(283, 250, 600, 553, 5)} fill="#f23a3a" />
      </Overlay>
    </Page>
  );
}
